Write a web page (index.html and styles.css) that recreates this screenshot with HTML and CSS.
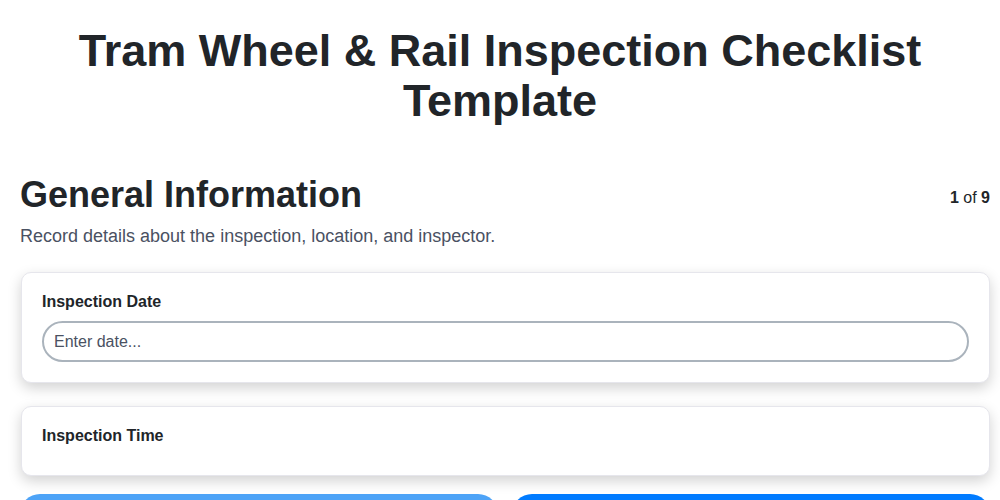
FILE: index.html
```html
<!DOCTYPE html>
<html lang="en">
<head>
    <meta charset="UTF-8">
    <meta name="viewport" content="width=device-width, initial-scale=1.0">
    <title>Tram Wheel &amp; Rail Inspection Checklist Template</title>
    <link rel="stylesheet" href="styles.css">
</head>
<body>
    <h1 class="title">Tram Wheel &amp; Rail Inspection Checklist Template</h1>
    <div class="section-head">
        <h2 class="section-title">General Information</h2>
        <div class="step"><b>1</b> of <b>9</b></div>
    </div>
    <p class="section-desc">Record details about the inspection, location, and inspector.</p>

    <div class="card">
        <label class="field-label" for="inspDate">Inspection Date</label>
        <input class="field-input" id="inspDate" type="text" placeholder="Enter date...">
    </div>
    <div class="card">
        <label class="field-label">Inspection Time</label>
    </div>

    <div class="nav">
        <button class="nav-button prev" disabled>Previous</button>
        <button class="nav-button next">Next</button>
    </div>
</body>
</html>
```

FILE: styles.css
```css
body {
    font-family: 'Liberation Sans', Arial, sans-serif;
    margin: 0;
    padding: 0 10px 20px 20px;
    background-color: #ffffff;
    color: #212529;
}
.title {
    font-size: 45px;
    line-height: 50px;
    font-weight: 700;
    text-align: center;
    margin: 26px 0 47px 0;
    padding: 0 40px 0 30px;
}
.section-head {
    display: flex;
    justify-content: space-between;
    align-items: center;
}
.section-title {
    font-size: 36px;
    line-height: 43px;
    font-weight: 700;
    margin: 0 0 7px 0;
}
.step {
    font-size: 16px;
    color: #212529;
}
.section-desc {
    font-size: 18px;
    line-height: 27px;
    color: #4a5162;
    margin: 0 0 22px 0;
}
.card {
    background-color: white;
    border: 1px solid #e6e6ec;
    border-radius: 10px;
    padding: 19px 20px 20px 20px;
    margin: 0 0 23px 1px;
    box-shadow: 0 5px 14px rgba(0, 0, 0, 0.18);
    display: flex;
    flex-direction: column;
}
.card + .card {
    margin-bottom: 18px;
}
.field-label {
    font-size: 16px;
    line-height: 19px;
    font-weight: 700;
    margin-bottom: 10px;
}
.field-input {
    font-family: inherit;
    font-size: 16px;
    height: 41px;
    box-sizing: border-box;
    border: 2px solid #aab3bc;
    border-radius: 999px;
    padding: 0 10px;
    color: #212529;
    outline: none;
}
.field-input::placeholder {
    color: #4a5162;
}
.nav {
    display: flex;
    gap: 14px;
}
.nav-button {
    flex: 1;
    height: 48px;
    border: none;
    border-radius: 20px;
    color: white;
    font-family: inherit;
    font-size: 16px;
    font-weight: 700;
    background-color: #007bff;
    cursor: pointer;
}
.nav-button.prev {
    background-color: #4da3f7;
}
```
